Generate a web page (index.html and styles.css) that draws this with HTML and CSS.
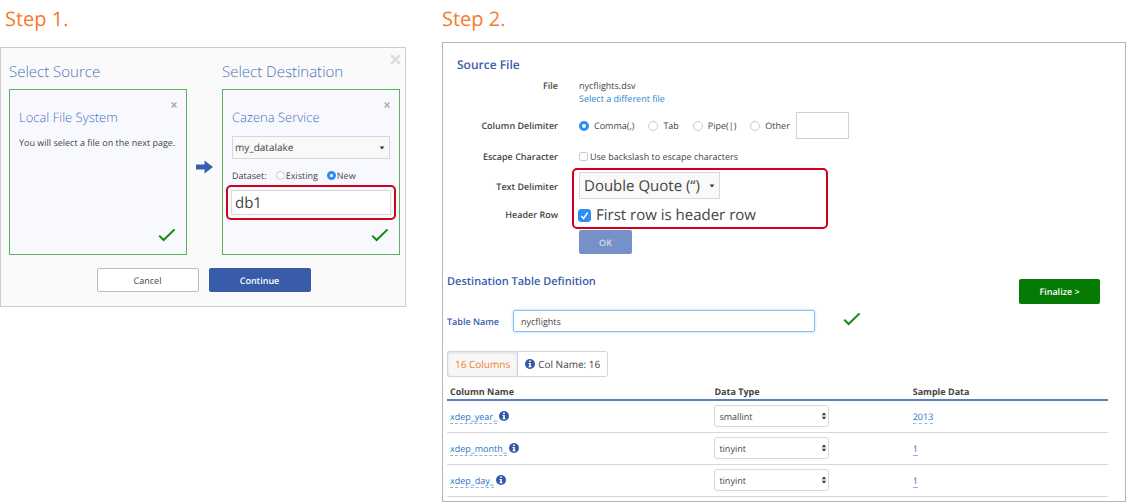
FILE: index.html
```html
<!DOCTYPE html>
<html lang="en">
<head>
<meta charset="utf-8">
<title>Load data</title>
<link rel="stylesheet" href="styles.css">
</head>
<body>
<svg class="defs" aria-hidden="true">
  <symbol id="check" viewBox="0 0 18 14"><path d="M1.2 7.6 5.6 12 16.6 1.4" fill="none" stroke="#128a12" stroke-width="2"/></symbol>
  <symbol id="info" viewBox="0 0 10 10"><circle cx="5" cy="5" r="5" fill="#3558a8"/><path d="M4.1 1.6h1.7v1.5H4.1zM3.5 4h2.3v3.2h.7v1H3.5v-1h.7V5h-.7z" fill="#fff"/></symbol>
  <symbol id="cross" viewBox="0 0 10 10"><path d="M1 1 9 9M9 1 1 9" fill="none" stroke="currentColor" stroke-width="2.4"/></symbol>
  <symbol id="updown" viewBox="0 0 6 8"><path d="M.6 3.3 3 .2l2.4 3.1zM.6 4.7 3 7.8l2.4-3.1z" fill="#444"/></symbol>
  <symbol id="down" viewBox="0 0 6 4"><path d="M.6.6h4.8L3 3.6z" fill="#333"/></symbol>
</svg>
<main class="steps">
  <section class="step">
    <h1 class="step-title">Step 1.</h1>
    <div class="dialog">
      <button class="close close-dialog" type="button" aria-label="Close"><svg><use href="#cross"/></svg></button>
      <div class="transfer">
        <div class="side">
          <h2 class="side-title">Select Source</h2>
          <div class="card">
            <button class="close close-card" type="button" aria-label="Remove source"><svg><use href="#cross"/></svg></button>
            <h3 class="card-title">Local File System</h3>
            <p class="card-text">You will select a file on the next page.</p>
            <svg class="check"><use href="#check"/></svg>
          </div>
        </div>
        <svg class="arrow" viewBox="0 0 17 14"><path d="M0 4.500h8.500V.5L17 7l-8.500 6.500v-4H0z" fill="#3a5fae"/></svg>
        <div class="side">
          <h2 class="side-title">Select Destination</h2>
          <div class="card">
            <button class="close close-card" type="button" aria-label="Remove destination"><svg><use href="#cross"/></svg></button>
            <h3 class="card-title">Cazena Service</h3>
            <div class="pick pick-lake">
              <select class="select" aria-label="Service"><option>my_datalake</option></select>
              <svg class="caret"><use href="#down"/></svg>
            </div>
            <div class="dataset">
              <span>Dataset:</span>
              <label class="choice"><input class="radio" type="radio" name="dataset">Existing</label>
              <label class="choice"><input class="radio" type="radio" name="dataset" checked>New</label>
            </div>
            <div class="marked marked-name"><input class="db-name" type="text" value="db1" aria-label="Dataset name"></div>
            <svg class="check"><use href="#check"/></svg>
          </div>
        </div>
      </div>
      <div class="actions">
        <button class="button button-plain" type="button">Cancel</button>
        <button class="button button-primary" type="button">Continue</button>
      </div>
    </div>
  </section>

  <section class="step">
    <h1 class="step-title">Step 2.</h1>
    <div class="panel">
      <h2 class="source-title">Source File</h2>
      <div class="form">
        <span class="label">File</span>
        <div class="value value-file"><span>nycflights.dsv</span><a class="link" href="#">Select a different file</a></div>
        <span class="label">Column Delimiter</span>
        <div class="value value-row">
          <label class="option"><input class="radio" type="radio" name="delimiter" checked>Comma(,)</label>
          <label class="option"><input class="radio" type="radio" name="delimiter">Tab</label>
          <label class="option"><input class="radio" type="radio" name="delimiter">Pipe(|)</label>
          <label class="option"><input class="radio" type="radio" name="delimiter">Other</label>
          <input class="other" type="text" aria-label="Other delimiter">
        </div>
        <span class="label">Escape Character</span>
        <label class="value value-row backslash"><input class="tick" type="checkbox">Use backslash to escape characters</label>
        <label class="label" for="quote">Text Delimiter</label>
        <label class="label" for="header">Header Row</label>
        <div class="marked marked-options">
          <div class="pick pick-quote">
            <select class="select" id="quote"><option>Double Quote (“)</option></select>
            <svg class="caret"><use href="#down"/></svg>
          </div>
          <label class="header-row"><input class="tick tick-large" id="header" type="checkbox" checked>First row is header row</label>
        </div>
        <button class="button button-ok" type="button">OK</button>
      </div>

      <div class="destination">
        <div class="destination-head">
          <h2 class="destination-title">Destination Table Definition</h2>
          <button class="button button-finalize" type="button">Finalize &gt;</button>
        </div>
        <div class="table-name">
          <label for="table-name">Table Name</label>
          <input class="name-input" id="table-name" type="text" value="nycflights">
          <svg class="check"><use href="#check"/></svg>
        </div>
        <div class="tabs">
          <button class="tab tab-active" type="button">16 Columns</button>
          <button class="tab" type="button"><svg class="info"><use href="#info"/></svg>Col Name: 16</button>
        </div>
        <table class="columns">
          <thead><tr><th class="col-name">Column Name</th><th class="col-type">Data Type</th><th>Sample Data</th></tr></thead>
          <tbody>
            <tr>
              <td><a class="edit" href="#">xdep_year_</a><svg class="info"><use href="#info"/></svg></td>
              <td><div class="pick pick-type"><select class="select" aria-label="Type of xdep_year_"><option>smallint</option></select><svg class="updown"><use href="#updown"/></svg></div></td>
              <td><a class="edit" href="#">2013</a></td>
            </tr>
            <tr>
              <td><a class="edit" href="#">xdep_month_</a><svg class="info"><use href="#info"/></svg></td>
              <td><div class="pick pick-type"><select class="select" aria-label="Type of xdep_month_"><option>tinyint</option></select><svg class="updown"><use href="#updown"/></svg></div></td>
              <td><a class="edit" href="#">1</a></td>
            </tr>
            <tr>
              <td><a class="edit" href="#">xdep_day_</a><svg class="info"><use href="#info"/></svg></td>
              <td><div class="pick pick-type"><select class="select" aria-label="Type of xdep_day_"><option>tinyint</option></select><svg class="updown"><use href="#updown"/></svg></div></td>
              <td><a class="edit" href="#">1</a></td>
            </tr>
          </tbody>
        </table>
      </div>
    </div>
  </section>
</main>
</body>
</html>
```

FILE: styles.css
```css
* { box-sizing: border-box; }
body {
  margin: 0;
  background: #fff;
  color: #444;
  font: 9px/13px "Open Sans", sans-serif;
  text-rendering: geometricPrecision;
}
h1, h2, h3, p { margin: 0; }
input, select, button { font: inherit; color: inherit; margin: 0; text-rendering: inherit; }
button { padding: 0; border: 0; background: none; }
a { text-decoration: none; }
.defs { display: block; width: 0; height: 0; }

.steps {
  display: grid;
  grid-template-columns: minmax(0, 406fr) minmax(0, 684fr);
  gap: 36px;
  align-items: start;
  padding-right: 22px;
}
.step-title {
  height: 42px;
  padding-top: 7px;
  color: #f47b2a;
  font-size: 20px;
  line-height: 24px;
  font-weight: 400;
}

/* Step 1 */
.step:first-child .step-title { height: 47px; padding-left: 5px; }
.dialog {
  position: relative;
  padding: 14px 5px 14px 8px;
  border: 1px solid #ccc;
  background: #fafafa;
}
.transfer { display: flex; align-items: center; gap: 9px; }
.side { flex: 1; min-width: 0; }
.side-title {
  height: 27px;
  color: #4a6fbd;
  font-size: 15px;
  line-height: 20px;
  font-weight: 300;
}
.card {
  position: relative;
  display: flex;
  flex-direction: column;
  height: 166px;
  padding: 17px 3px 12px;
  border: 1px solid #5cb25c;
  background: #f8f9ff;
}
.card-title {
  padding-left: 6px;
  color: #4a6fbd;
  font-size: 13px;
  line-height: 20px;
  font-weight: 300;
}
.card-text { padding: 9px 6px 0; }
.check { flex: none; width: 18px; height: 14px; }
.card .check { margin: auto 7px 0 auto; }
.arrow { flex: none; width: 17px; height: 14px; margin-top: 16px; }
.close { position: absolute; line-height: 0; color: #aaa; }
.close svg { width: 100%; height: 100%; }
.close-card { top: 12px; right: 9px; width: 6px; height: 6px; }
.close-dialog { top: 6px; right: 4px; width: 11px; height: 11px; color: #ddd; }

.pick { position: relative; display: flex; }
.select {
  width: 100%;
  appearance: none;
  border: 1px solid #d8d8d8;
  border-radius: 0;
  background: #f9f9f9;
}
.caret { position: absolute; top: 50%; right: 5px; width: 6px; height: 4px; margin-top: -2px; }
.pick-lake { margin: 9px 6px 0; }
.pick-lake .select { height: 23px; padding: 0 2px; font-size: 10px; }
.dataset { display: flex; align-items: center; padding: 10px 6px 3px; }
.choice { display: flex; align-items: center; gap: 1px; margin-left: 9px; }
.radio {
  flex: none;
  width: 9px;
  height: 9px;
  appearance: none;
  border: 1px solid #ccc;
  border-radius: 50%;
  background: #fff;
}
.radio:checked { border: 3px solid #2e8df7; }
.marked { border: 2px solid #d0021b; border-radius: 5px; }
.marked-name { display: flex; padding: 3px; }
.db-name {
  width: 100%;
  height: 25px;
  padding: 0 3px;
  border: 1px solid #d8d8d8;
  background: #fff;
  font-size: 15px;
}
.actions { display: flex; justify-content: center; gap: 10px; margin-top: 13px; padding-right: 2px; }
.button { width: 102px; height: 24px; border-radius: 2px; font-weight: 600; text-align: center; }
.button-plain { border: 1px solid #bbb; background: #fff; font-weight: 400; }
.button-primary { background: #385ca9; color: #fff; }

/* Step 2 */
.panel { height: 460px; overflow: hidden; padding: 13px 17px 0 4px; border: 1px solid #b5b5b5; }
.source-title {
  padding-left: 10px;
  color: #3a5cab;
  font-size: 12px;
  line-height: 18px;
  font-weight: 600;
}
.form {
  display: grid;
  grid-template-columns: 111px minmax(0, 1fr);
  grid-template-rows: 33px 27px 34px 26px 31px 27px;
  column-gap: 21px;
  padding-top: 5px;
}
.label { grid-column: 1; align-self: center; text-align: right; font-weight: 600; }
.label:first-child { align-self: start; }
.value { grid-column: 2; }
.value-file { display: flex; flex-direction: column; align-items: flex-start; }
.link { color: #2a86d1; }
.value-row { display: flex; align-items: center; }
.option { display: flex; align-items: center; gap: 5px; margin-right: 14px; }
.option:nth-child(4) { margin-right: 6px; }
.option .radio { width: 10px; height: 10px; }
.other { width: 53px; height: 27px; border: 1px solid #d0d0d0; background: #fff; }
.backslash { gap: 2px; }
.tick {
  flex: none;
  width: 9px;
  height: 9px;
  appearance: none;
  border: 1px solid #ccc;
  border-radius: 2px;
  background: #fff;
}
.tick-large { width: 13px; height: 13px; border-radius: 3px; }
.tick:checked {
  border-color: #2e8df7;
  background: #2e8df7 url("data:image/svg+xml,%3Csvg xmlns='http://www.w3.org/2000/svg' viewBox='0 0 11 11'%3E%3Cpath d='M2.300 6 4.500 8.500 8.700 2.500' fill='none' stroke='white' stroke-width='1.500'/%3E%3C/svg%3E");
}
.marked-options {
  grid-column: 2;
  grid-row: 4 / 6;
  width: 256px;
  height: 61px;
  margin: -5px 0 0 -7px;
  padding: 2px 3px 0 5px;
}
.pick-quote { width: 141px; }
.pick-quote .select { height: 27px; padding: 0 4px; font-size: 15px; line-height: 24px; }
.header-row { display: flex; align-items: center; gap: 5px; margin: 6px 0 0 -1px; font-size: 15px; line-height: 20px; }
.button-ok { grid-column: 2; width: 53px; background: #7690c8; color: #d5dcec; }

.destination-head { display: flex; justify-content: space-between; align-items: flex-start; padding: 17px 8px 0 0; }
.destination-title { color: #3a5cab; font-size: 11px; line-height: 16px; font-weight: 600; }
.button-finalize { width: 81px; height: 25px; margin-top: 5px; background: #057a05; color: #fff; }
.table-name { display: flex; align-items: center; padding-top: 6px; color: #3a5cab; font-weight: 600; }
.table-name label { width: 66px; }
.table-name .check { margin: -4px 0 0 28px; }
.name-input {
  width: 302px;
  height: 22px;
  padding: 0 7px;
  border: 1px solid #8cc2f0;
  border-radius: 2px;
  box-shadow: 0 0 3px #a9d3f5;
  color: #444;
  font-weight: 400;
}
.tabs { display: flex; margin-top: 19px; }
.tab {
  display: flex;
  align-items: center;
  gap: 3px;
  height: 26px;
  padding: 0 7px;
  border: 1px solid #d5d5d5;
  border-radius: 0 3px 3px 0;
  background: #fff;
  font-size: 10px;
}
.tab-active { border-right: 0; border-radius: 3px 0 0 3px; background: #f7f7f7; color: #f47b2a; box-shadow: inset 0 1px 3px #ddd; }
.info { width: 10px; height: 10px; }
.columns { width: 100%; margin-top: 6px; border-collapse: collapse; table-layout: fixed; }
.columns th { height: 17px; padding: 0 3px; border-bottom: 2px solid #5d7fc4; text-align: left; font-weight: 700; }
.columns td { height: 32px; padding: 0 3px; border-bottom: 1px solid #d8d8d8; }
.col-name { width: 40%; }
.col-type { width: 30%; }
.edit { border-bottom: 1px dashed #8fb4e6; color: #2a72c4; }
.columns .info { margin-left: 2px; vertical-align: -1px; }
.pick-type { width: 115px; }
.pick-type .select { height: 22px; padding: 0 4px; border-radius: 3px; background: #fff; }
.updown { position: absolute; top: 7px; right: 2px; width: 6px; height: 8px; }
```
